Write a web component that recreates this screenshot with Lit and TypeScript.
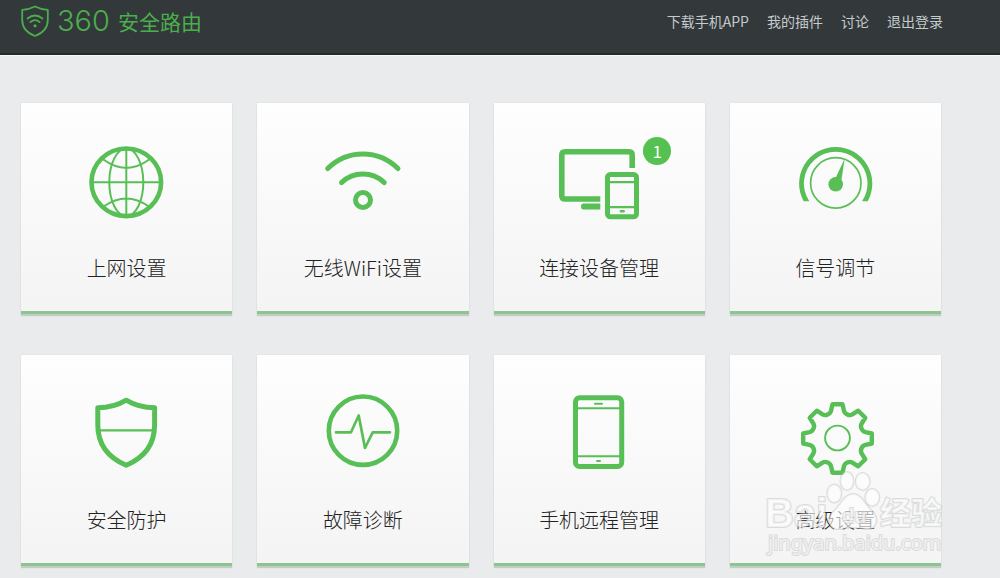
import { LitElement, html, svg, css, nothing, TemplateResult } from "lit";
import { customElement, property } from "lit/decorators.js";

/** Closed outline of an eight-toothed cog centred on (cx, cy). */
function gearPath(cx: number, cy: number): string {
  const at = (x: number, y: number, turn: number) => {
    const a = (turn * Math.PI) / 4;
    const px = cx + x * Math.cos(a) - y * Math.sin(a);
    const py = cy + x * Math.sin(a) + y * Math.cos(a);
    return `${px.toFixed(2)} ${py.toFixed(2)}`;
  };
  let d = `M${at(-5, -34.3, 0)}`;
  for (let i = 0; i < 8; i++) {
    d += ` L${at(5, -34.3, i)} L${at(6.4, -28, i)}`;
    d += ` Q${at(7.2, -24.8, i)} ${at(10, -24, i)}`;
    d += ` L${at(-10, -24, i + 1)}`;
    d += ` Q${at(-7.2, -24.8, i + 1)} ${at(-6.4, -28, i + 1)} L${at(-5, -34.3, i + 1)}`;
  }
  return d + "Z";
}

const icons: Record<string, TemplateResult> = {
  globe: svg`
    <ellipse cx="105.3" cy="79.3" rx="34.8" ry="33.8" stroke-width="4.6"/>
    <g stroke-width="2">
      <ellipse cx="105.3" cy="79.3" rx="17" ry="33.8"/>
      <path d="M105.3 46V113M71 79.3H140M82 56.3Q105.3 73.5 128.6 56.3M83 103.3Q105.3 87.5 127.6 103.3"/>
    </g>`,
  wifi: svg`
    <g stroke-width="5" stroke-linecap="round">
      <path d="M70.7 65.6A49.6 49.6 0 0 1 141 65.6M84.5 79.6A31.2 31.2 0 0 1 127.3 79.6"/>
      <circle cx="106" cy="97" r="7.5"/>
    </g>`,
  devices: svg`
    <path stroke-width="5.6" d="M107.3 96H72Q68.8 96 68.8 92.8V52Q68.8 48.8 72 48.8H136Q139.2 48.8 139.2 52V65"/>
    <path fill="currentColor" stroke="none" d="M107.3 100.6V106.4H90.5Q88 106.4 88 103.5T90.5 100.6Z"/>
    <rect x="114.5" y="71.4" width="29" height="42.4" rx="3" stroke-width="5"/>
    <path stroke-width="2.2" d="M116 79.2H142M116 104.2H142"/>
    <path stroke-width="2.6" stroke-linecap="round" d="M128 108.3H130.6"/>`,
  gauge: svg`
    <g fill="currentColor" stroke="none">
      <path d="M74.7 98.3A36.6 36.6 0 1 1 138.7 98.3H133.1A31.8 31.8 0 1 0 80.3 98.3Z"/>
      <circle cx="106.7" cy="81.3" r="7.3"/>
      <path d="M105.6 77L115.7 55.4L112 80Z"/>
    </g>
    <circle cx="106.8" cy="79.9" r="25.2" stroke-width="1.7"/>`,
  shield: svg`
    <path stroke-width="5" stroke-linejoin="round"
      d="M105.2 45.2C97 50.2 88 52.8 76.8 52.8V70C76.8 89.5 87 102.5 105.2 110.3C123.4 102.5 133.6 89.5 133.6 70V52.8C122.4 52.8 113.4 50.2 105.2 45.2Z"/>
    <path stroke-width="2.3" d="M78 75.3H132.5"/>`,
  pulse: svg`
    <circle cx="106" cy="75.7" r="34.2" stroke-width="4.6"/>
    <path stroke-width="2.7" stroke-linecap="round" stroke-linejoin="round"
      d="M79 77.3H94L101.7 60.5L108 93L115.7 77.3H133"/>`,
  phone: svg`
    <rect x="82.5" y="42.8" width="46.2" height="68.7" rx="4" stroke-width="5"/>
    <path stroke-width="2" d="M84 53.2H128M84 101.2H128"/>
    <path stroke-width="2" stroke-linecap="round" d="M102 48.7H109M104 105.9H107"/>`,
  gear: svg`
    <path stroke-width="4.4" stroke-linejoin="round" d=${gearPath(108.5, 83.5)}/>
    <circle cx="108.5" cy="83" r="12.4" stroke-width="1.9"/>`,
};

@customElement("feature-card")
class FeatureCard extends LitElement {
  @property() icon = "";
  @property() label = "";
  @property({ type: Number }) count = 0;

  static styles = css`
    :host {
      display: block;
    }
    .card {
      display: flex;
      flex-direction: column;
      align-items: center;
      padding: 30px 0 28px;
      border-bottom: 3px solid #8fc492;
      background: linear-gradient(#fefefe, #f4f4f4) padding-box;
      box-shadow: 0 2px 1px #bfd0c2, 0 0 2px #dddfe0;
      color: #222;
      text-decoration: none;
    }
    .figure {
      position: relative;
      width: 120px;
      height: 100px;
      color: #58bf57;
    }
    .icon {
      display: block;
      width: 120px;
      height: 100px;
      fill: none;
      stroke: currentColor;
    }
    .badge {
      position: absolute;
      top: 4px;
      left: 104px;
      width: 28px;
      height: 28px;
      border-radius: 50%;
      background: #54c150;
      color: #fff;
      font-size: 17px;
      line-height: 28px;
      text-align: center;
    }
    .label {
      margin-top: 20px;
      font-size: 20px;
      font-weight: 300;
      line-height: 30px;
    }
  `;

  render() {
    return html`<a class="card" href="#${this.icon}">
      <span class="figure">
        <svg class="icon" viewBox="46 30 120 100" aria-hidden="true">${icons[this.icon]}</svg>
        ${this.count ? html`<span class="badge">${this.count}</span>` : nothing}
      </span>
      <span class="label">${this.label}</span>
    </a>`;
  }
}

@customElement("app-root")
class AppRoot extends LitElement {
  static styles = css`
    :host {
      display: block;
      min-height: 100vh;
      overflow: hidden;
      background: #eaebed;
      font-family: "Noto Sans CJK SC", sans-serif;
    }
    .header {
      display: flex;
      justify-content: space-between;
      align-items: center;
      padding: 0 57px 11px 21px;
      background: #33383b;
      border-bottom: 2px solid #25292b;
      box-shadow: 0 1px 0 #f8f9fa;
    }
    .logo {
      display: flex;
      align-items: center;
      height: 42px;
      color: #4bae4c;
      text-decoration: none;
      line-height: 42px;
    }
    .mark {
      width: 28px;
      height: 32px;
      margin-right: 8px;
      fill: none;
      stroke: currentColor;
    }
    .digits {
      margin-right: 8px;
      font-family: "Inter", sans-serif;
      font-size: 29px;
      font-weight: 300;
    }
    .name {
      font-size: 21px;
      font-weight: 400;
    }
    .nav {
      display: flex;
      gap: 18px;
    }
    .link {
      color: #c5cacc;
      font-size: 14px;
      line-height: 42px;
      text-decoration: none;
    }
    .grid {
      display: grid;
      grid-template-columns: repeat(4, minmax(0, 1fr));
      gap: 41px 25px;
      padding: 48px 59px 0 21px;
    }
    .last {
      position: relative;
    }
    .watermark {
      position: absolute;
      left: 37px;
      top: 116px;
      width: 180px;
      height: 90px;
      overflow: visible;
      pointer-events: none;
      fill: rgba(255, 255, 255, 0.6);
      stroke: rgba(190, 192, 194, 0.5);
      stroke-width: 2px;
      stroke-linejoin: round;
      paint-order: stroke;
    }
    .latin {
      font: bold 40px "Liberation Sans", sans-serif;
    }
    .han {
      font-size: 31px;
      font-weight: 700;
    }
    .small {
      font: bold 20px "Liberation Sans", sans-serif;
    }
    .site {
      font: 20px "Noto Sans", sans-serif;
    }
  `;

  private links = ["下载手机APP", "我的插件", "讨论", "退出登录"];

  private cards = [
    { icon: "globe", label: "上网设置" },
    { icon: "wifi", label: "无线WiFi设置" },
    { icon: "devices", label: "连接设备管理", count: 1 },
    { icon: "gauge", label: "信号调节" },
    { icon: "shield", label: "安全防护" },
    { icon: "pulse", label: "故障诊断" },
    { icon: "phone", label: "手机远程管理" },
  ];

  render() {
    return html`
      <header class="header">
        <a class="logo" href="#home">
          <svg class="mark" viewBox="0 0 28 32" aria-hidden="true">
            <path stroke-width="1.8" stroke-linejoin="round"
              d="M14 1.5C10 3.5 6 4.7 1.2 4.8V15C1.2 23 6 28 14 31C22 28 26.8 23 26.8 15V4.8C22 4.7 18 3.5 14 1.5Z"/>
            <path stroke-width="1.7" stroke-linecap="round"
              d="M6.5 13.5Q14 7.5 21.5 13.5M9.3 17.2Q14 13.2 18.7 17.2"/>
            <circle cx="14" cy="20.8" r="1.6" fill="currentColor" stroke="none"/>
          </svg>
          <span class="digits">360</span><span class="name">安全路由</span>
        </a>
        <nav class="nav">
          ${this.links.map((text) => html`<a class="link" href="#">${text}</a>`)}
        </nav>
      </header>
      <main class="grid">
        ${this.cards.map(
          (c) => html`<feature-card .icon=${c.icon} .label=${c.label} .count=${c.count ?? 0}></feature-card>`
        )}
        <div class="last">
          <feature-card icon="gear" label="高级设置"></feature-card>
          <svg class="watermark" viewBox="0 0 180 90">
            <text class="latin" x="-2" y="56">Bai</text>
            <ellipse cx="67.3" cy="22.5" rx="7" ry="9"/>
            <ellipse cx="80" cy="10" rx="6.5" ry="9"/>
            <ellipse cx="95.7" cy="10.5" rx="7" ry="8.5"/>
            <ellipse cx="105.3" cy="26.5" rx="7" ry="8.5"/>
            <path d="M86 23C95 23 98 34 105 40C113 48 109 59 99 58C90 56 82 56 73 58C62 59 59 48 67 40C74 34 77 23 86 23Z"/>
            <text class="small" x="75" y="52">du</text>
            <text class="han" x="113" y="53">经验</text>
            <text class="site" x="1" y="79">jingyan.baidu.com</text>
          </svg>
        </div>
      </main>
    `;
  }
}
